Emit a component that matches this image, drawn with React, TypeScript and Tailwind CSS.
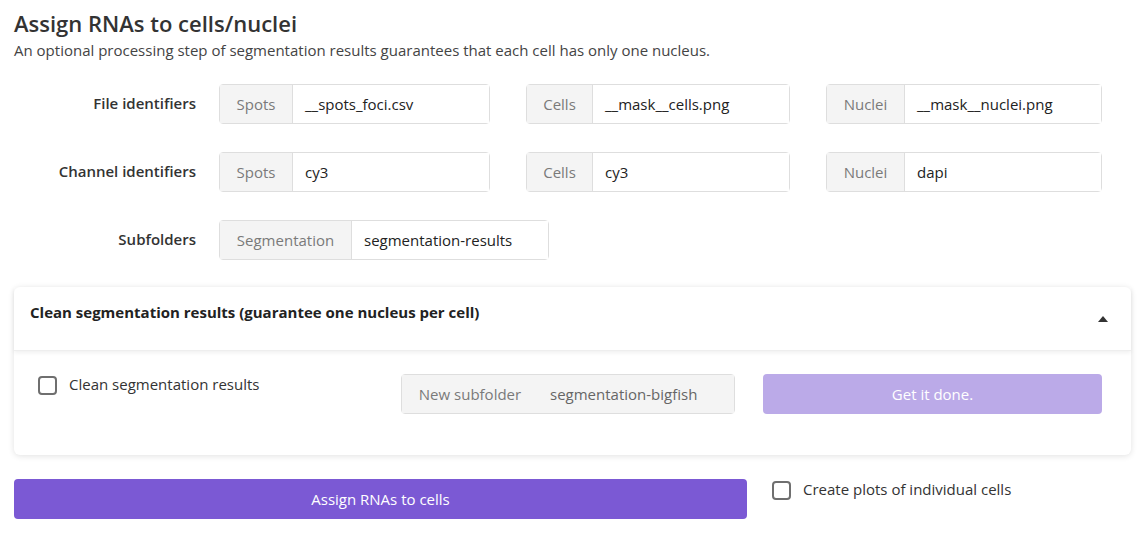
import React from 'react';

const FONT = { fontFamily: '"Open Sans", "Noto Sans", sans-serif' };

function Group({
  prefix,
  value,
  width,
  prefixWidth,
  disabled,
}: {
  prefix: string;
  value: string;
  width: string;
  prefixWidth: string;
  disabled?: boolean;
}) {
  return (
    <div className={`flex h-10 rounded border border-[#dedede] ${width}`}>
      <div
        className={`flex shrink-0 items-center justify-center border-r border-[#dedede] bg-[#f4f4f4] text-[15px] text-[#7a7a7a] ${prefixWidth} ${disabled ? 'border-r-0' : ''}`}
      >
        {prefix}
      </div>
      <div
        className={`flex flex-1 items-center px-3 text-[15px] text-[#222] ${disabled ? 'bg-[#f4f4f4] text-[#666]' : 'bg-white'}`}
      >
        {value}
      </div>
    </div>
  );
}

function Checkbox() {
  return <span className="inline-block h-[19px] w-[19px] shrink-0 rounded-[4px] border-2 border-[#6f6f6f] bg-white" />;
}

function Row({ label, children }: { label: string; children: React.ReactNode }) {
  return (
    <div className="flex items-start">
      <div className="w-[196px] pt-[8px] text-right text-[15px] font-semibold text-[#333]">{label}</div>
      <div className="ml-[23px] flex gap-[36px]">{children}</div>
    </div>
  );
}

export default function App() {
  return (
    <div className="min-h-[535px] w-[1145px] bg-white text-[#333]" style={FONT}>
      <div className="px-[14px] pt-[8px]">
        <h1 className="text-[22px] font-semibold leading-[30px] text-[#333]">Assign RNAs to cells/nuclei</h1>
        <p className="mt-[2px] text-[15px] leading-5 text-[#444]">
          An optional processing step of segmentation results guarantees that each cell has only one nucleus.
        </p>
      </div>

      <div className="mt-[24px] flex flex-col gap-[28px]">
        <Row label="File identifiers">
          <Group prefix="Spots" value="__spots_foci.csv" width="w-[271px]" prefixWidth="w-[73px]" />
          <Group prefix="Cells" value="__mask__cells.png" width="w-[264px]" prefixWidth="w-[66px]" />
          <Group prefix="Nuclei" value="__mask__nuclei.png" width="w-[276px]" prefixWidth="w-[78px]" />
        </Row>
        <Row label="Channel identifiers">
          <Group prefix="Spots" value="cy3" width="w-[271px]" prefixWidth="w-[73px]" />
          <Group prefix="Cells" value="cy3" width="w-[264px]" prefixWidth="w-[66px]" />
          <Group prefix="Nuclei" value="dapi" width="w-[276px]" prefixWidth="w-[78px]" />
        </Row>
        <Row label="Subfolders">
          <Group prefix="Segmentation" value="segmentation-results" width="w-[330px]" prefixWidth="w-[132px]" />
        </Row>
      </div>

      <div className="mx-[14px] mt-[27px] rounded-md bg-white shadow-[0_1px_6px_rgba(0,0,0,0.12)]">
        <div className="flex h-[64px] items-start justify-between border-b border-[#eee] pl-4 pr-[23px] shadow-[0_2px_4px_rgba(0,0,0,0.06)]">
          <span className="pt-[14px] text-[15px] font-bold text-[#222]">
            Clean segmentation results (guarantee one nucleus per cell)
          </span>
          <svg width="10" height="6" viewBox="0 0 10 6" className="mt-[29px]">
            <path d="M5 0 L10 6 L0 6 Z" fill="#333" />
          </svg>
        </div>
        <div className="flex h-[104px] items-start px-6 pt-[23px]">
          <label className="flex w-[363px] items-center gap-[12px] pt-px">
            <Checkbox />
            <span className="-mt-[2px] text-[15px] text-[#333]">Clean segmentation results</span>
          </label>
          <Group
            prefix="New subfolder"
            value="segmentation-bigfish"
            width="w-[334px]"
            prefixWidth="w-[136px]"
            disabled
          />
          <button type="button" className="ml-[28px] h-10 w-[339px] rounded bg-[#bbaae8] text-[15px] text-white">
            Get it done.
          </button>
        </div>
      </div>

      <div className="mt-[24px] flex items-start px-[14px]">
        <button type="button" className="h-10 w-[733px] rounded bg-[#7b59d4] text-[15px] text-white">
          Assign RNAs to cells
        </button>
        <label className="ml-[25px] flex items-center gap-[12px] pt-px">
          <Checkbox />
          <span className="-mt-[2px] text-[15px] text-[#333]">Create plots of individual cells</span>
        </label>
      </div>
    </div>
  );
}
